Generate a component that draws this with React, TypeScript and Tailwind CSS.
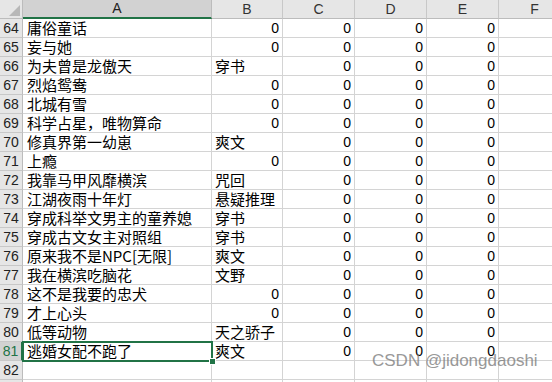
import React from "react";

const rows: [number, string, string | number | null][] = [
  [64, "庸俗童话", 0],
  [65, "妄与她", 0],
  [66, "为夫曾是龙傲天", "穿书"],
  [67, "烈焰鸳鸯", 0],
  [68, "北城有雪", 0],
  [69, "科学占星，唯物算命", 0],
  [70, "修真界第一幼崽", "爽文"],
  [71, "上瘾", 0],
  [72, "我靠马甲风靡横滨", "咒回"],
  [73, "江湖夜雨十年灯", "悬疑推理"],
  [74, "穿成科举文男主的童养媳", "穿书"],
  [75, "穿成古文女主对照组", "穿书"],
  [76, "原来我不是NPC[无限]", "爽文"],
  [77, "我在横滨吃脑花", "文野"],
  [78, "这不是我要的忠犬", 0],
  [79, "才上心头", 0],
  [80, "低等动物", "天之骄子"],
  [81, "逃婚女配不跑了", "爽文"],
];

const cjk = { fontFamily: '"Noto Sans CJK SC", "Liberation Sans", sans-serif' };
const num = { fontFamily: '"Liberation Sans", "Noto Sans", sans-serif' };

function NumCell({ v }: { v: string | number | null }) {
  return (
    <div className="h-[19px] border-r border-b border-[#d4d4d4] flex items-center justify-end pr-[3px] text-[14px] text-black" style={num}>
      {v === null ? "" : String(v)}
    </div>
  );
}

export default function App() {
  const cols = "grid grid-cols-[23px_189px_71px_72px_72px_72px_72px]";
  return (
    <div className="relative w-[552px] h-[382px] overflow-hidden bg-white">
      <div className="w-[571px]">
        {/* header */}
        <div className={cols}>
          <div className="h-[19px] bg-[#e6e6e6] border-r border-b border-[#bcbcbc] relative">
            <div className="absolute right-[2px] bottom-[2px] w-0 h-0 border-l-[11px] border-l-transparent border-b-[11px] border-b-[#b8b8b8]" />
          </div>
          {["A", "B", "C", "D", "E", "F"].map((c, i) => (
            <div
              key={c}
              className={
                i === 0
                  ? "h-[19px] bg-[#d2d2d2] border-r border-[#bcbcbc] border-b-2 border-b-[#217346] flex items-center justify-center text-[14px] text-[#222]"
                  : "h-[19px] bg-[#e6e6e6] border-r border-b border-[#c8c8c8] border-b-[#bcbcbc] flex items-center justify-center text-[14px] text-[#333]"
              }
              style={num}
            >
              {c}
            </div>
          ))}
        </div>
        {rows.map(([n, a, b]) => {
          const sel = n === 81;
          const bIsText = typeof b === "string";
          return (
            <div key={n} className={cols}>
              <div
                className={
                  sel
                    ? "h-[19px] bg-[#d2d2d2] border-r-2 border-r-[#217346] border-b border-b-[#c8c8c8] flex items-center justify-center text-[14px] text-[#217346]"
                    : "h-[19px] bg-[#e6e6e6] border-r border-b border-[#c8c8c8] border-r-[#bcbcbc] flex items-center justify-center text-[14px] text-[#222]"
                }
                style={num}
              >
                {n}
              </div>
              <div className="h-[19px] border-r border-b border-[#d4d4d4] flex items-center pl-[4px] text-[15px] text-black whitespace-nowrap overflow-visible" style={cjk}>
                {a}
              </div>
              {bIsText ? (
                <div className="h-[19px] border-r border-b border-[#d4d4d4] flex items-center pl-[3px] text-[15px] text-black whitespace-nowrap" style={cjk}>
                  {b}
                </div>
              ) : (
                <NumCell v={b} />
              )}
              <NumCell v={0} />
              <NumCell v={0} />
              <NumCell v={0} />
              <NumCell v={null} />
            </div>
          );
        })}
        <div className={cols}>
          <div className="h-[19px] bg-[#e6e6e6] border-r border-b border-[#c8c8c8] border-r-[#bcbcbc] flex items-center justify-center text-[14px] text-[#222]" style={num}>
            82
          </div>
          {[0, 1, 2, 3, 4, 5].map((i) => (
            <NumCell key={i} v={null} />
          ))}
        </div>
        <div className={cols}>
          <div className="h-[19px] bg-[#e6e6e6] border-r border-[#bcbcbc]" />
          {[0, 1, 2, 3, 4, 5].map((i) => (
            <div key={i} className="h-[19px] border-r border-[#d4d4d4]" />
          ))}
        </div>
      </div>
      {/* selection box */}
      <div className="absolute left-[22px] top-[341px] w-[191px] h-[21px] border-2 border-[#217346] pointer-events-none" />
      <div className="absolute left-[209px] top-[358px] w-[7px] h-[7px] bg-[#217346] border border-white" />
      {/* watermark */}
      <div className="absolute left-[372px] top-[350px] text-[17px] leading-[22px] text-[#808080] opacity-80" style={{ fontFamily: '"Liberation Sans", sans-serif' }}>
        CSDN @jidongdaoshi
      </div>
    </div>
  );
}
